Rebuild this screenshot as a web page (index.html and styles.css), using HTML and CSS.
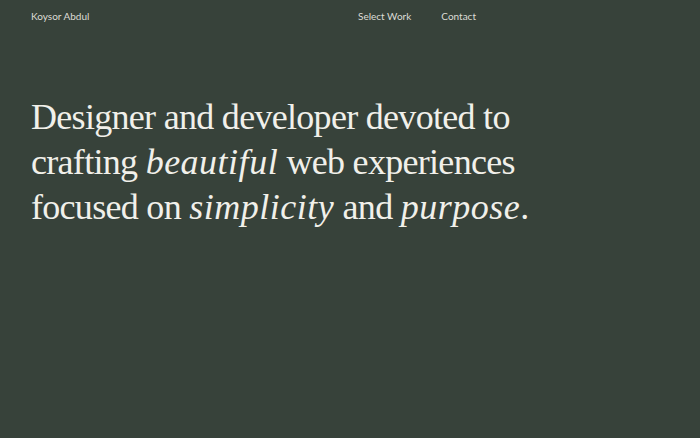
FILE: index.html
```html
<!DOCTYPE html>
<html lang="en">

<head>
    <meta charset="UTF-8">
    <meta name="viewport" content="width=device-width, initial-scale=1.0">
    <title>Koysor Abdul</title>
    <link rel="stylesheet" href="styles.css">
</head>

<body>
    <header class="site-header">
        <a class="brand" href="#">Koysor Abdul</a>
        <nav class="nav">
            <a href="#">Select Work</a>
            <a href="#">Contact</a>
        </nav>
    </header>

    <main class="hero">
        <h1>Designer and developer devoted to<br>
            crafting <em>beautiful</em> web experiences<br>
            focused on <em>simplicity</em> and <em>purpose</em>.</h1>
    </main>
</body>

</html>
```

FILE: styles.css
```css
body {
    margin: 0;
    padding: 0;
    min-height: 100vh;
    background-color: #37423a;
    color: #f1f0ea;
    font-family: Lato, "Liberation Sans", sans-serif;
}

a {
    color: inherit;
    text-decoration: none;
}

.site-header {
    display: grid;
    grid-template-columns: 1fr 1fr;
    column-gap: 16px;
    padding: 9px 31px 0;
    font-size: 10px;
    line-height: 14px;
    color: #dcdcd5;
}

.nav {
    display: flex;
    gap: 30px;
}

.hero {
    padding: 0 31px;
}

.hero h1 {
    margin: 72px 0 0;
    font-family: "Liberation Serif", serif;
    font-weight: normal;
    font-size: 36px;
    line-height: 45px;
    letter-spacing: -0.7px;
}

.hero em {
    font-style: italic;
    letter-spacing: 0.5px;
}
```
